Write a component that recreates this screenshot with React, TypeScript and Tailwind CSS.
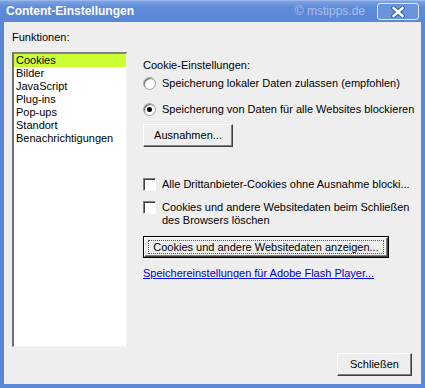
import React from "react";

const items = ["Cookies", "Bilder", "JavaScript", "Plug-ins", "Pop-ups", "Standort", "Benachrichtigungen"];

function Radio({ checked }: { checked?: boolean }) {
  return (
    <span className="flex h-[13px] w-[13px] shrink-0 items-center justify-center rounded-full border border-[#a0a0a0] bg-[radial-gradient(circle_at_65%_65%,#ffffff_40%,#e4e4e4_100%)] shadow-[inset_1px_1px_0_#707070]">
      {checked && <span className="h-[5px] w-[5px] rounded-full bg-black" />}
    </span>
  );
}

function Check() {
  return (
    <span className="block h-[13px] w-[13px] shrink-0 border-t border-l border-t-[#808080] border-l-[#808080] border-b border-r border-b-white border-r-white bg-white shadow-[inset_1px_1px_0_#404040]" />
  );
}

export default function App() {
  return (
    <div
      className="flex h-[388px] w-[425px] flex-col bg-[#5a86d6] text-[11px] leading-[13px] text-black"
      style={{ fontFamily: '"Liberation Sans", Arial, sans-serif' }}
    >
      {/* Titelleiste */}
      <div className="flex h-[22px] shrink-0 items-center border-t border-[#9bb8ee] bg-[linear-gradient(#7da3e6,#5f8ad8_30%,#5a86d6)] pl-[6px] pr-[6px]">
        <span className="text-[12px] font-bold text-white">Content-Einstellungen</span>
        <span className="ml-auto mr-[12px] text-[12px] text-[#a7c0ee]">© mstipps.de</span>
        <span className="flex h-[17px] w-[42px] items-center justify-center rounded-[3px] border border-[#dfe8f9] bg-[#6a93dc]">
          <svg width="14" height="12" viewBox="0 0 14 12">
            <path d="M2.5 2 L11.5 10 M11.5 2 L2.5 10" stroke="#3c5fa8" strokeWidth="4.5" strokeLinecap="square" />
            <path d="M2.5 2 L11.5 10 M11.5 2 L2.5 10" stroke="#ffffff" strokeWidth="2.4" strokeLinecap="square" />
          </svg>
        </span>
      </div>

      {/* Fensterinhalt */}
      <div className="flex flex-1 flex-col border-x-[4px] border-b-[4px] border-x-[#5a86d6] border-b-[#5a86d6] shadow-[0_1px_0_#2e55a8]">
        <div className="flex flex-1 flex-col bg-[#eeeeee] pb-[8px] pl-[8px] pr-[9px] pt-[9px]">
          <div className="flex flex-1">
            <div className="flex w-[115px] shrink-0 flex-col">
              <div className="h-[13px]">Funktionen:</div>
              <div className="mt-[8px] h-[295px] border-t-2 border-l-2 border-t-[#808080] border-l-[#707070] border-b border-r border-b-[#f4f4f4] border-r-[#f4f4f4] bg-white">
                {items.map((it, i) => (
                  <div key={it} className={`pl-[2px] ${i === 0 ? "bg-[#ccff33]" : ""}`}>
                    {it}
                  </div>
                ))}
              </div>
            </div>

            <div className="ml-[16px] flex min-w-0 flex-1 flex-col items-start whitespace-nowrap pt-[28px]">
              <div>Cookie-Einstellungen:</div>
              <label className="mt-[5px] flex items-center gap-[6px]">
                <Radio />
                <span>Speicherung lokaler Daten zulassen (empfohlen)</span>
              </label>
              <label className="mt-[13px] flex items-center gap-[6px]">
                <Radio checked />
                <span>Speicherung von Daten für alle Websites blockieren</span>
              </label>
              <button className="mt-[8px] h-[23px] w-[90px] border border-t-white border-l-white border-b-[#404040] border-r-[#404040] bg-[#eeeeee] shadow-[inset_-1px_-1px_0_#808080]">
                Ausnahmen...
              </button>

              <label className="mt-[31px] flex items-center gap-[6px]">
                <Check />
                <span>Alle Drittanbieter-Cookies ohne Ausnahme blocki...</span>
              </label>
              <label className="mt-[10px] flex items-start gap-[6px]">
                <Check />
                <span className="w-[250px] whitespace-normal">Cookies und andere Websitedaten beim Schließen des Browsers löschen</span>
              </label>
              <button className="mt-[9px] h-[22px] w-[246px] border border-black bg-[#eeeeee] p-0">
                <span className="flex h-full w-full items-center justify-center border border-t-white border-l-white border-b-[#404040] border-r-[#404040] shadow-[inset_-1px_-1px_0_#808080]">
                  <span className="flex h-[14px] w-[236px] items-center justify-center border border-dotted border-[#555555]">
                    Cookies und andere Websitedaten anzeigen...
                  </span>
                </span>
              </button>
              <a href="#" className="mt-[9px] text-[#0000cc] underline">
                Speichereinstellungen für Adobe Flash Player...
              </a>
            </div>
          </div>

          <div className="mt-[6px] flex justify-end">
            <button className="h-[23px] w-[75px] border border-t-white border-l-white border-b-[#404040] border-r-[#404040] bg-[#eeeeee] shadow-[inset_-1px_-1px_0_#808080]">
              Schließen
            </button>
          </div>
        </div>
      </div>
    </div>
  );
}
